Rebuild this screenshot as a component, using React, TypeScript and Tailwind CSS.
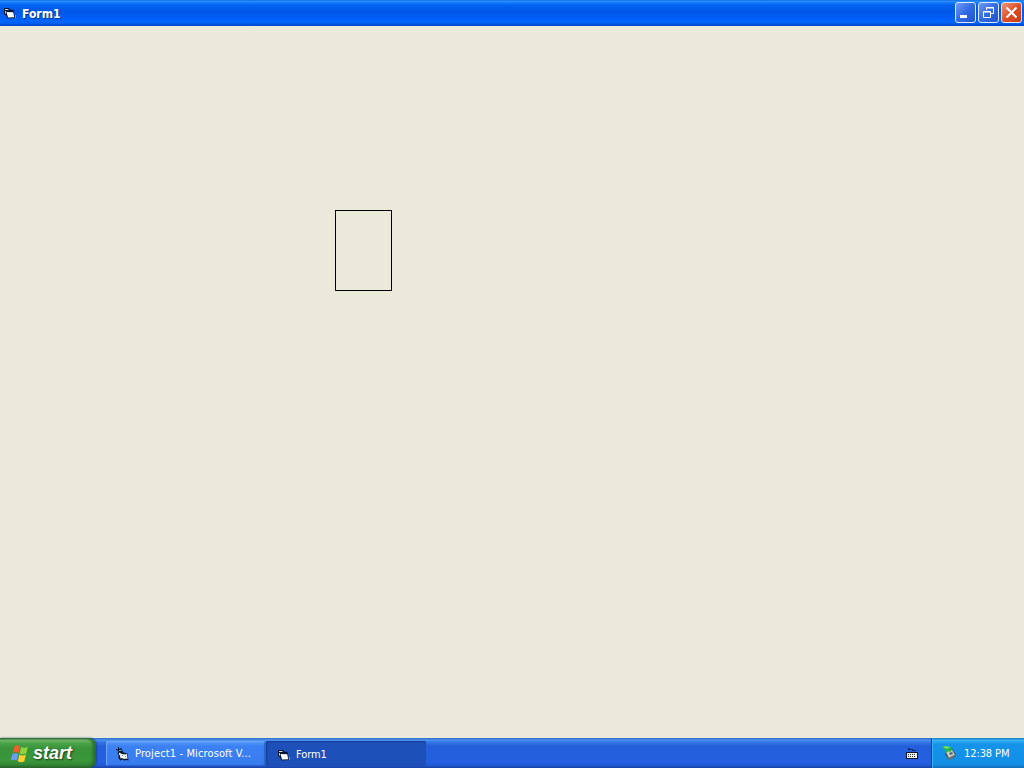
import type { ReactNode } from "react";
import clsx from "clsx";

function FormIcon() {
  return (
    <svg viewBox="0 0 16 16" className="h-4 w-4 shrink-0">
      <path d="M2 3h5l1 1.5 3.5.5L13 13l-7.5.5L4 10.5 2 9z" fill="#07142f" />
      <path d="M3 4h3.5v1H3z" fill="#c5dbe9" />
      <path d="m3 6 1 .3V9L3 8z" fill="#c5dbe9" />
      <path d="m4.5 7 6.7.3 1 5-6.2.3z" fill="#fff" />
      <path d="M13 10h1v3h-1z" fill="#a58b90" />
    </svg>
  );
}

function ProjectIcon() {
  return (
    <svg viewBox="0 0 16 16" className="h-4 w-4 shrink-0">
      <path d="m1 3 2 .5V1h1v2l3-1v1L5.500 4l3 1-1 1 5 1.500 1 7-2-.5-2 .5-2-1-2 1-2-2V9L2.500 7l1-2L1 4z" fill="#091831" />
      <path d="M4 6.500 7 8l3 .5 2-.5.5 5-1.500-.5-2 .5-2-1-1.500.5-.5-3L4 8.500z" fill="#f5f7f5" />
      <path d="M4 4h2v1H4z" fill="#53b9c9" />
      <path d="M7 9h1v1H7z" fill="#4a8390" />
      <path d="M10 10h1v1h-1z" fill="#a66f54" />
    </svg>
  );
}

function WindowsLogo() {
  return (
    <svg viewBox="0 0 17 17" className="h-[19px] w-[19px] shrink-0">
      <path d="M4 2Q6 .3 9 2L7.7 8Q5 6.4 2.4 8z" fill="#f0602b" />
      <path d="M10 2.6q3 1.5 6-.1l-1.5 6q-3 1.5-6-.1z" fill="#8ed43c" />
      <path d="M2.2 9Q5 7.4 7.5 9l-1.4 5.8Q3.4 13.2.7 14.8z" fill="#6a9df5" />
      <path d="M8.4 9.5q3 1.6 5.9 0l-1.5 6q-3 1.6-5.8 0z" fill="#fbd02f" />
    </svg>
  );
}

function CaptionButton({ label, close, children }: { label: string; close?: boolean; children: ReactNode }) {
  return (
    <button
      aria-label={label}
      className={clsx(
        "flex h-[21px] w-[21px] items-center justify-center rounded-[3px] border border-[#dce8fb]",
        close
          ? "bg-linear-to-br from-[#ed9479] via-[#df4f27] to-[#c43b12]"
          : "bg-linear-to-br from-[#719bf4] via-[#316ae2] to-[#2055cf]"
      )}
    >
      <svg viewBox="0 0 19 19" className="h-[19px] w-[19px] shrink-0" fill="none" stroke="#fff">
        {children}
      </svg>
    </button>
  );
}

function TitleBar() {
  return (
    <header className="flex h-[26px] shrink-0 items-center bg-[linear-gradient(180deg,#0860d8_0%,#3493ff_4%,#127dff_10%,#0262ee_20%,#0057e5_45%,#005cf5_65%,#0066ff_84%,#005be9_91%,#0045c5_100%)] pl-[2px] pr-[2px]">
      <FormIcon />
      <span className="ml-[4px] pt-px font-['DejaVu_Sans_Condensed',sans-serif] text-[12px] leading-4 font-bold text-white [text-shadow:1px_1px_#0b358f]">
        Form1
      </span>
      <div className="ml-auto flex gap-[2px] pb-[2px]">
        <CaptionButton label="Minimize">
          <path d="M4 13.5h7" strokeWidth="3" />
        </CaptionButton>
        <CaptionButton label="Restore">
          <path d="M7.5 7V4.5h7v6H12M4.5 8.5h7v6h-7zM7 5h8M4 9h8" />
        </CaptionButton>
        <CaptionButton label="Close" close>
          <path d="m4.5 4.5 10 10m0-10-10 10" strokeWidth="2" />
        </CaptionButton>
      </div>
    </header>
  );
}

function TaskButton({ icon, title, active }: { icon: ReactNode; title: string; active?: boolean }) {
  return (
    <button
      className={clsx(
        "flex h-[25px] items-center rounded-[2px] text-left font-['DejaVu_Sans_Condensed',sans-serif] text-[11px] leading-4 whitespace-nowrap text-white",
        active
          ? "w-[160px] bg-[#1d50b8] pt-[2px] pl-[10px] shadow-[inset_1px_1px_2px_#143c91]"
          : "w-[159px] bg-linear-to-b from-[#5b9cfb] via-[#3c81f3] via-20% to-[#377bee] pl-[9px] shadow-[inset_1px_1px_1px_#70a8fb,inset_-1px_-1px_1px_#2862cf]"
      )}
    >
      {icon}
      <span className={clsx("ml-[4px]", active ? "tracking-[-0.1px]" : "tracking-[0.13px]")}>{title}</span>
    </button>
  );
}

function Taskbar() {
  return (
    <footer className="flex h-[30px] shrink-0 bg-[linear-gradient(180deg,#3269c5_0%,#4b92ef_7%,#3376e5_14%,#245edb_28%,#2460df_80%,#215bd4_90%,#1941a5_100%)]">
      <button className="flex h-[30px] w-[96px] items-center rounded-r-[8px] bg-[linear-gradient(180deg,#316c2f_0%,#70b66b_8%,#4aa247_18%,#38933a_35%,#3a973a_75%,#348535_90%,#245f28_100%)] pl-[10px] shadow-[inset_-3px_0_3px_#286c2b,1px_0_2px_#1845a0]">
        <WindowsLogo />
        <span className="ml-[4px] pb-px font-['Liberation_Sans',sans-serif] text-[18px] leading-5 font-bold text-white italic [text-shadow:1px_1px_2px_#153e18]">
          start
        </span>
      </button>
      <div className="ml-[10px] flex gap-px pt-[3px]">
        <TaskButton icon={<ProjectIcon />} title="Project1 - Microsoft V..." />
        <TaskButton icon={<FormIcon />} title="Form1" active />
      </div>
      <div className="mr-[12px] ml-auto flex items-center">
        <svg viewBox="0 0 14 14" className="h-[14px] w-[14px]" shapeRendering="crispEdges">
          <path d="M3 2h2v1h3v1h3v1H7V4H3z" fill="#102c64" />
          <path d="M1 6h12v7H1z" fill="#10182a" />
          <path d="M2 7h10v5H2z" fill="#f3f1df" />
          <path d="M3 8h1v1H3zM5 8h1v1H5zM7 8h1v1H7zM9 8h1v1H9zM3 10h1v1H3zM5 10h1v1H5zM7 10h1v1H7zM9 10h1v1H9z" fill="#252935" />
        </svg>
      </div>
      <div className="flex w-[93px] items-center border-l border-[#123e9b] bg-[linear-gradient(180deg,#1675be_0%,#35b4f4_8%,#1693e9_20%,#1290e8_75%,#168ee1_90%,#0e62b1_100%)] pl-[9px] shadow-[inset_1px_0_1px_#33b9f5]">
        <svg viewBox="0 0 16 16" className="h-4 w-4 shrink-0">
          <path d="m5 6 6-2 4 5-1 3-6 3-4-5z" fill="#455c66" />
          <path d="m5 7 6-2 3 5-6 3z" fill="#c4cfca" />
          <path d="m8 8 3-1 1 2-3 1z" fill="#596a6c" />
          <path d="m1 2 3-1 6 1v5L7 6 5 8 4 5z" fill="#28b449" />
          <path d="m2 2 3-1 4 1-3 2z" fill="#71df70" />
          <path d="m7 13 6-3v2l-5 3z" fill="#6e7776" />
        </svg>
        <span className="ml-[7px] pt-px font-['DejaVu_Sans_Condensed',sans-serif] text-[11px] leading-4 tracking-[-0.1px] whitespace-nowrap text-white">
          12:38 PM
        </span>
      </div>
    </footer>
  );
}

export default function App() {
  return (
    <div className="flex h-[768px] w-[1024px] flex-col overflow-hidden bg-[#ebe9d9]">
      <TitleBar />
      <main className="flex-1 pt-[184px] pl-[335px]">
        <div className="h-[81px] w-[57px] border border-black" />
      </main>
      <Taskbar />
    </div>
  );
}
